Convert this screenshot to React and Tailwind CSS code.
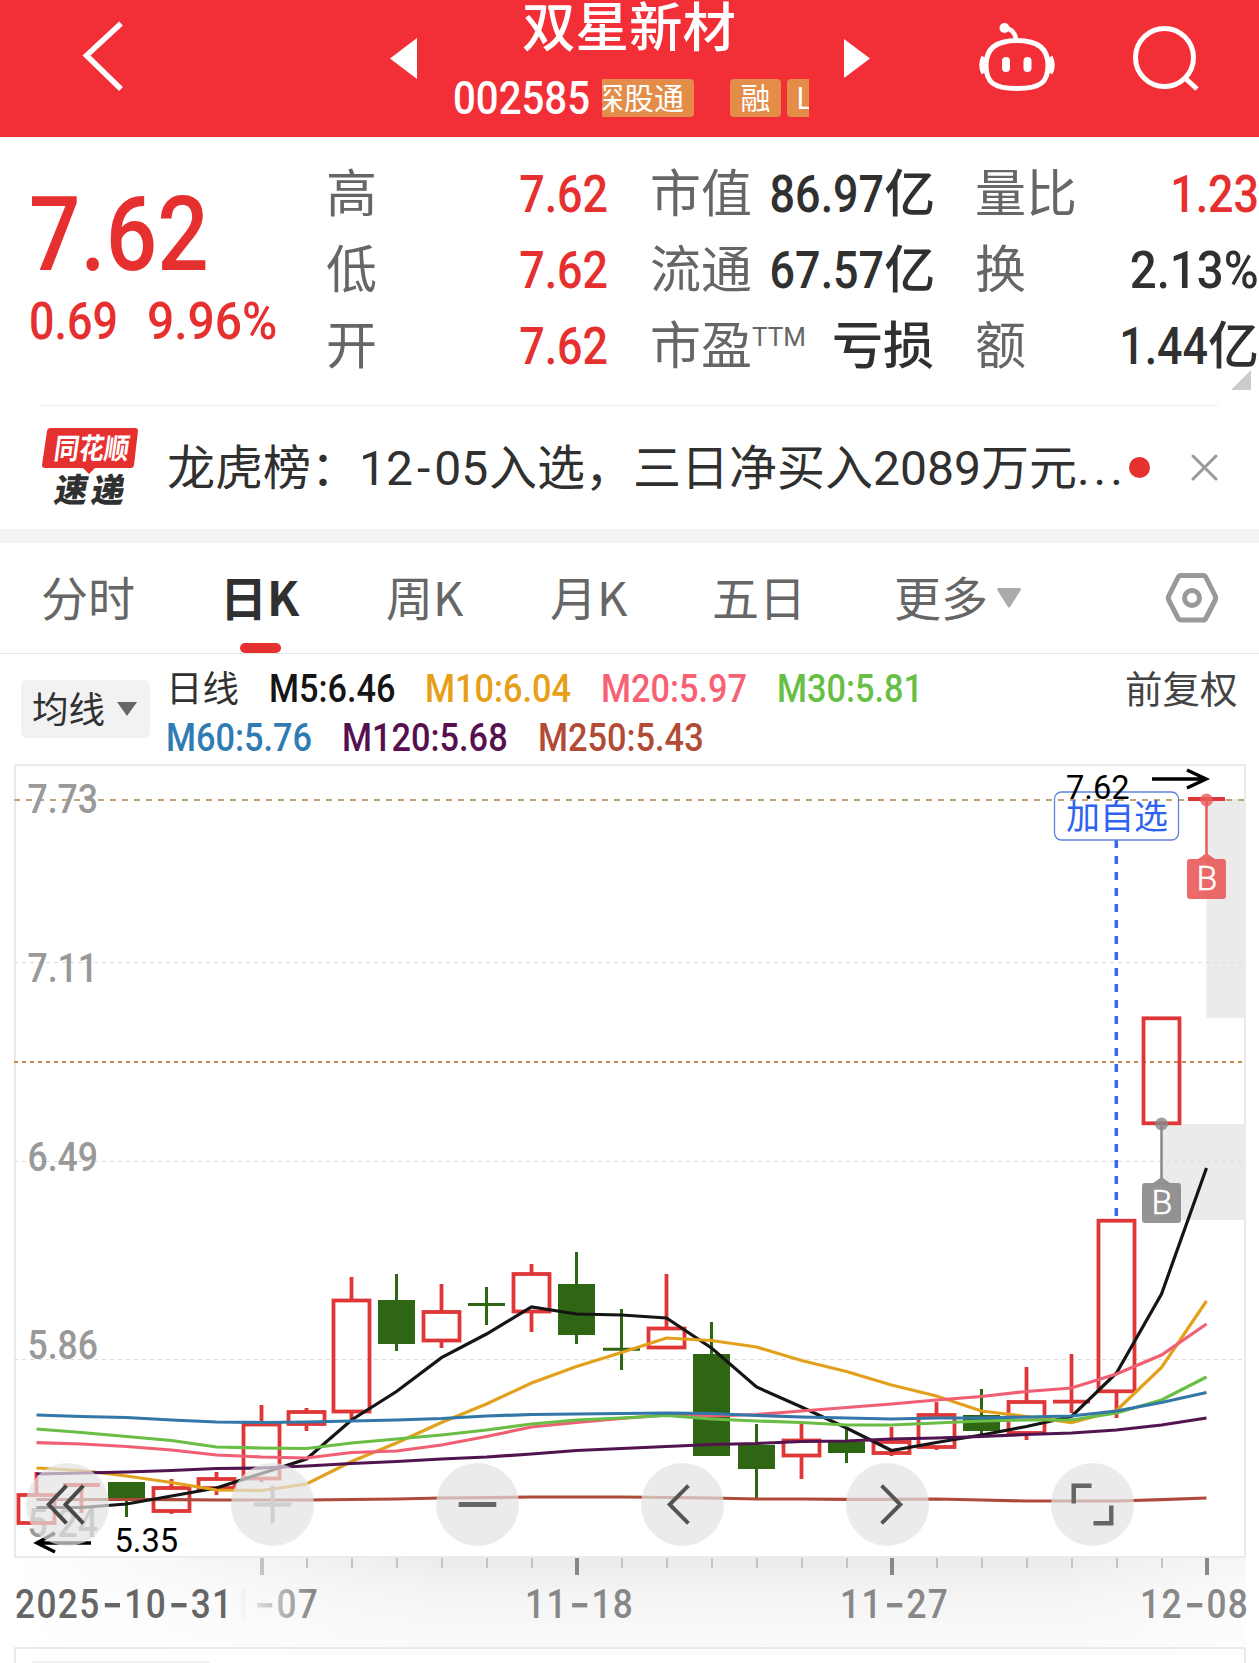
import clsx from 'clsx';

const MA_LEGEND = [
    [
        { label: 'M5:6.46', className: 'w-[156px] text-[#151515]' },
        { label: 'M10:6.04', className: 'w-[176px] text-[#e69f16]' },
        { label: 'M20:5.97', className: 'w-[176px] text-[#f66174]' },
        { label: 'M30:5.81', className: 'w-[176px] text-[#67bf45]' },
    ],
    [
        { label: 'M60:5.76', className: 'w-[176px] text-[#2f7cb4]' },
        { label: 'M120:5.68', className: 'w-[196px] text-[#57104f]' },
        { label: 'M250:5.43', className: 'w-[196px] text-[#b14b35]' },
    ],
];

// [high, body top, body bottom, low, up]
const CANDLES = [
    [1472, 1495, 1523, 1523, 1],
    [1485, 1485, 1485, 1513, 1],
    [1482, 1482, 1498, 1517, 0],
    [1479, 1488, 1511, 1514, 1],
    [1472, 1479, 1488, 1495, 1],
    [1405, 1424.5, 1478.5, 1482, 1],
    [1408, 1412, 1424, 1431, 1],
    [1277, 1300.5, 1411.5, 1419, 1],
    [1274, 1300, 1344, 1351, 0],
    [1284, 1312, 1340.5, 1348, 1],
    [1287, 1304.5, 1304.5, 1325, 0],
    [1264, 1274, 1311.5, 1332, 1],
    [1252, 1284, 1335, 1344, 0],
    [1309, 1349.3, 1349.3, 1370, 0],
    [1274, 1328.5, 1347.5, 1347.5, 1],
    [1322, 1354, 1456, 1456, 0],
    [1424, 1445, 1469, 1498, 0],
    [1424, 1440.5, 1455.5, 1479, 1],
    [1427, 1441.5, 1453, 1463, 0],
    [1427, 1442, 1453, 1456, 1],
    [1402, 1415, 1447, 1450, 1],
    [1389, 1415, 1431, 1434, 0],
    [1367, 1402, 1433, 1440, 1],
    [1354, 1401.7, 1401.7, 1413, 1],
    [1220.7, 1220.7, 1391.3, 1418, 1],
    [1018.3, 1018.3, 1123.3, 1123.3, 1],
    [799, 799, 799, 799, 1],
];

const MA_LINES = [
    { color: '#ae4a3a', ys: [1499.5, 1499.5, 1499.5, 1499.7, 1500, 1500, 1500, 1499.5, 1499, 1498, 1497.7, 1497, 1497, 1497, 1497.5, 1498, 1499, 1499, 1499.3, 1499.3, 1499, 1500, 1501, 1501, 1501, 1499.7, 1498] },
    { color: '#151515', ys: [1507.5, 1507.5, 1504, 1496, 1488, 1473.5, 1459, 1420, 1391.5, 1357.7, 1334, 1307, 1314, 1315, 1318, 1348, 1387, 1407, 1428, 1450.5, 1442.5, 1435, 1426.5, 1416.5, 1373, 1294, 1168] },
    { color: '#e3a01c', ys: [1468, 1470.5, 1476, 1482.5, 1490, 1490.5, 1484, 1461.5, 1443, 1422.5, 1404, 1383, 1366.5, 1352.5, 1338, 1340.5, 1347, 1360.5, 1371.5, 1385, 1396, 1411, 1416.5, 1422.5, 1410.5, 1367.5, 1301] },
    { color: '#f05f73', ys: [1442.7, 1444, 1446.5, 1450, 1455, 1457, 1458, 1452.5, 1451, 1445, 1436.5, 1427, 1422.5, 1418.5, 1415, 1416, 1414.5, 1411, 1407.5, 1404, 1400, 1396.5, 1391.5, 1388, 1374, 1355, 1324] },
    { color: '#6abd45', ys: [1429, 1432.5, 1436.5, 1440.5, 1447, 1448, 1448.5, 1443, 1439, 1435, 1430, 1424, 1420, 1418, 1415.5, 1419, 1421, 1422.5, 1425, 1425, 1423, 1421, 1420, 1420, 1413, 1400, 1377] },
    { color: '#3277a8', ys: [1415, 1416.5, 1417.5, 1420, 1422, 1422.5, 1422, 1421, 1420, 1418.5, 1416, 1414.5, 1414, 1413.5, 1413, 1413.5, 1415.5, 1417, 1418, 1419, 1418, 1418, 1417, 1416, 1411, 1402.5, 1392.5] },
    { color: '#521351', ys: [1474, 1473, 1472, 1470.5, 1468.5, 1468, 1466, 1463.5, 1461.5, 1459, 1457, 1454, 1450.5, 1448.5, 1446.5, 1444.5, 1443.5, 1441.5, 1441, 1439, 1438, 1436.5, 1434.5, 1433, 1430, 1425, 1418] },
];

const xAt = (i) => 36.5 + i * 45;

const Num = ({ children, className, scale = 'scale-x-[0.88]' }) => (
    <span className={clsx('inline-block whitespace-nowrap font-[Roboto] font-medium', scale, className)}>{children}</span>
);

const Header = () => (
    <header className="flex h-[137px] items-start bg-[#f22f37] text-white">
        <svg className="ml-[80px] mt-[18px] h-[76px] w-[46px]" viewBox="80 18 46 76" fill="none" stroke="white" strokeWidth="5.5">
            <path d="M121 23.500L86.500 55.500L121 89" />
        </svg>
        <svg className="ml-[264px] mt-[38px] h-[41px] w-[27px]" viewBox="0 0 27 41" fill="white"><path d="M27 0V41L0 20.500Z" /></svg>
        <div className="ml-[36px] w-[356px]">
            <h1 className="h-[79px] pr-[4px] text-center text-[53.500px] font-medium leading-[48px]">双星新材</h1>
            <div className="flex h-[38px] items-center">
                <div className="w-[149px] shrink-0"><Num scale="scale-x-[0.855]" className="origin-left translate-y-px text-[47px] leading-[38px]">002585</Num></div>
                <div className="flex w-[207px] overflow-hidden text-[30px] leading-[34px]">
                    <div className="flex h-[38px] w-[92px] shrink-0 justify-end overflow-hidden rounded-r bg-[#e38d49] pr-[10px]"><span className="whitespace-nowrap">深股通</span></div>
                    <div className="ml-[36px] h-[38px] w-[51px] shrink-0 rounded bg-[#e38d49] text-center">融</div>
                    <div className="ml-[6px] h-[38px] w-[51px] shrink-0 rounded bg-[#e38d49] pl-[9px]">L1</div>
                </div>
            </div>
        </div>
        <svg className="ml-[35px] mt-[39px] h-[39px] w-[26px]" viewBox="0 0 26 39" fill="white"><path d="M0 0V39L26 19.500Z" /></svg>
        <svg className="ml-[107px] mt-[20px] h-[76px] w-[80px]" viewBox="977 20 80 76" fill="none" stroke="white" strokeWidth="5">
            <path d="M1017 40.500C1037 40.500 1048 48 1048 65C1048 82 1041 88.500 1017 88.500C993 88.500 986 82 986 65C986 48 997 40.500 1017 40.500Z" />
            <path d="M984 57Q980 65 984 73M1050 57Q1054 65 1050 73" strokeWidth="5.500" />
            <path d="M1005 28Q1015 29 1016 40" strokeWidth="4.500" />
            <circle cx="1004.500" cy="28" r="5" fill="white" stroke="none" />
            <rect x="1002" y="57" width="8" height="15" rx="4" fill="white" stroke="none" />
            <rect x="1023.500" y="57" width="8" height="15" rx="4" fill="white" stroke="none" />
        </svg>
        <svg className="ml-[73px] mt-[22px] h-[72px] w-[70px]" viewBox="1130 22 70 72" fill="none" stroke="white" strokeWidth="5">
            <circle cx="1164.500" cy="57.500" r="29" />
            <path d="M1185 78L1197 89" />
        </svg>
    </header>
);

const Stat = ({ label, sup, value, unit, scale, red }) => (
    <div className="flex h-[76px] items-center justify-between whitespace-nowrap">
        <span className="flex -translate-x-[2px] -translate-y-[3px] text-[#666]">
            {label}
            {sup && <sup className="top-0 pt-[13px] font-[Roboto] text-[26px] leading-[40px]">{sup}</sup>}
        </span>
        <span className={clsx('flex items-center font-medium', red ? 'text-[#e63030]' : 'text-[#303030]')}>
            {value && <Num scale={scale} className="origin-right translate-y-[2px]">{value}</Num>}
            {unit && <span className="-translate-y-[3px]">{unit}</span>}
        </span>
    </div>
);

const Quote = () => (
    <section className="relative flex h-[268px] pt-[18px] text-[51px] leading-[76px]">
        <div className="w-[328px] pl-[29px] text-[#e63030]">
            <div className="mt-[28px] h-[104px] leading-[104px]"><Num className="origin-left text-[103px]">7.62</Num></div>
            <div className="flex h-[60px] leading-[60px]">
                <div className="w-[118px]"><Num className="origin-left">0.69</Num></div>
                <div><Num scale="scale-x-[0.94]" className="origin-left">9.96%</Num></div>
            </div>
        </div>
        <div className="w-[280px]">
            <Stat label="高" value="7.62" red />
            <Stat label="低" value="7.62" red />
            <Stat label="开" value="7.62" red />
        </div>
        <div className="ml-[44px] w-[282px]">
            <Stat label="市值" value="86.97" unit="亿" />
            <Stat label="流通" value="67.57" unit="亿" />
            <Stat label="市盈" sup="TTM" unit="亏损" />
        </div>
        <div className="ml-[43px] w-[282px]">
            <Stat label="量比" value="1.23" red />
            <Stat label="换" value="2.13%" scale="scale-x-[0.93]" />
            <Stat label="额" value="1.44" unit="亿" />
        </div>
        <svg className="absolute bottom-[15px] right-[8px] h-[20px] w-[20px]" viewBox="0 0 20 20" fill="#ccc"><path d="M20 0V20H0Z" /></svg>
    </section>
);

const News = () => (
    <section className="mx-[41px] flex h-[124px] items-center border-t border-[#ececec] text-[48px] text-[#303030]">
        <svg className="h-[84px] w-[98px] shrink-0" viewBox="41 426 98 84">
            <path d="M51 428H135Q138 428 138 431L134 465Q133.500 468 131 468H95L89 474L83 468H45Q42 468 42 465L47 431Q47.500 428 51 428Z" fill="#e63030" />
            <text transform="translate(53 459) skewX(-8)" textLength="75" lengthAdjust="spacingAndGlyphs" fontSize="29" fontWeight="700" fill="white">同花顺</text>
            <text transform="translate(53 502) skewX(-10)" textLength="70" fontSize="33" fontWeight="900" fill="#303030">速递</text>
        </svg>
        <p className="ml-[28px] flex w-[962px] shrink-0 translate-y-px whitespace-nowrap font-[Roboto,'Noto_Sans_CJK_SC',sans-serif]">
            <span>龙虎榜：</span>
            <span className="w-[130px]">12<span className="mx-[4px]">-</span>05</span>
            <span>入选，三日净买入</span>
            <span>2089</span>
            <span>万元</span>
            <span className="tracking-[4px]">...</span>
        </p>
        <span className="h-[21px] w-[21px] shrink-0 rounded-full bg-[#e63030]" />
        <svg className="ml-[41px] h-[27px] w-[27px] shrink-0" viewBox="0 0 27 27" stroke="#999" strokeWidth="3" strokeLinecap="round"><path d="M2 2L25 25M25 2L2 25" /></svg>
    </section>
);

const Tabs = () => (
    <nav className="flex h-[111px] items-center border-b border-[#e6e6e6] text-[47px] leading-[104px] text-[#666]">
        <span className="ml-[41px] w-[179px] -translate-y-[2px]">分时</span>
        <span className="relative w-[166px] font-bold text-[#303030]">
            <span className="block -translate-y-[2px]">日K</span>
            <i className="absolute bottom-[-3px] left-[20px] h-[10px] w-[41px] rounded-full bg-[#e63030]" />
        </span>
        <span className="w-[164px] -translate-y-[2px]">周K</span>
        <span className="w-[162px] -translate-y-[2px]">月K</span>
        <span className="w-[182px] -translate-y-[2px]">五日</span>
        <span className="w-[103px] -translate-y-[2px]">更多</span>
        <svg className="h-[20px] w-[24px]" viewBox="0 0 24 20" fill="#aaa"><path d="M1 0H23Q24.500 1 23.500 2.500L13 19Q12 20.500 11 19L0.500 2.500Q-0.500 1 1 0Z" /></svg>
        <svg className="ml-[143px] h-[52px] w-[56px]" viewBox="1164 572 56 52" fill="none" stroke="#999" strokeWidth="5" strokeLinejoin="round">
            <path d="M1181 575.500H1203Q1205 575.500 1206 577.500L1215 595.500Q1216.500 598 1215 600.500L1206 618Q1205 620 1203 620H1181Q1179 620 1178 618L1169 600.500Q1167.500 598 1169 595.500L1178 577.500Q1179 575.500 1181 575.500Z" />
            <circle cx="1192" cy="598" r="7.500" />
        </svg>
    </nav>
);

const Legend = () => (
    <section className="flex h-[106px] text-[36.500px] text-[#303030]">
        <button className="ml-[21px] mt-[26px] flex h-[58px] w-[129px] items-center rounded-[6px] bg-[#f2f2f2] pl-[11px] leading-[50px]">
            <span className="w-[85px] -translate-y-px text-left">均线</span>
            <svg className="h-[14px] w-[20px]" viewBox="0 0 20 14" fill="#666"><path d="M0 0H20L10 14Z" /></svg>
        </button>
        <div className="ml-[16px] mt-[7px] w-[959px] text-[39px] leading-[48px]">
            <div className="flex h-[49px]">
                <span className="w-[103px] translate-y-[2px] text-[36.500px]">日线</span>
                {MA_LEGEND[0].map((m) => <div key={m.label} className={m.className}><Num className="origin-left">{m.label}</Num></div>)}
            </div>
            <div className="flex h-[49px]">
                {MA_LEGEND[1].map((m) => <div key={m.label} className={m.className}><Num className="origin-left">{m.label}</Num></div>)}
            </div>
        </div>
        <span className="mt-[9px] whitespace-nowrap text-[37.500px] leading-[48px] text-[#444]">前复权</span>
    </section>
);

const Candle = ({ x, data }) => {
    const [high, top, bottom, low, up] = data;
    const color = up ? '#df3737' : '#2f6614';
    return (
        <g stroke={color} strokeWidth={up ? 3.8 : 3}>
            {high < top && <path d={`M${x} ${high}V${top}`} />}
            {low > bottom && <path d={`M${x} ${bottom}V${low}`} />}
            {top === bottom && <path d={`M${x - 18.5} ${top}H${x + 18.5}`} />}
            {top !== bottom && up === 1 && <rect x={x - 18} y={top} width="36" height={bottom - top} fill="none" />}
            {top !== bottom && up === 0 && <rect x={x - 18.5} y={top} width="37" height={bottom - top} fill={color} stroke="none" />}
        </g>
    );
};

const AxisText = ({ x, y, size = 40, sx = 0.89, weight = 500, fill = '#999', children }) => (
    <text transform={`translate(${x} ${y}) scale(${sx} 1)`} fontFamily="Roboto" fontSize={size} fontWeight={weight} fill={fill}>{children}</text>
);

const DateText = ({ x, fill = '#888', value }) => (
    <text transform={`translate(${x} 1617.700) scale(0.88 1)`} fontFamily="Roboto" fontSize="40" fontWeight="500" letterSpacing="1.600" fill={fill}>
        {value.split('-').map((part, i) => (
            <tspan key={i}>
                {i > 0 && <tspan fontFamily="Inter" fontSize="54" fontWeight="400" letterSpacing="0" dx="1" dy="4">-</tspan>}
                <tspan dx={i > 0 ? 1 : 0} dy={i > 0 ? -4 : 0}>{part}</tspan>
            </tspan>
        ))}
    </text>
);

const TradeMark = ({ x, y, color }) => (
    <g>
        <circle cx={x} cy={y} r="6.500" fill={color} fillOpacity="0.8" />
        <path d={`M${x} ${y}V${y + 54}`} stroke={color} strokeWidth="2.500" />
        <path d={`M${x - 9} ${y + 59.500}L${x} ${y + 53}L${x + 9} ${y + 59.500}Z`} fill={color} fillOpacity="0.9" />
        <rect x={x - 19.500} y={y + 59} width="39" height="40" rx="3" fill={color} fillOpacity="0.9" />
        <text x={x + 0.500} y={y + 90} fontFamily="Roboto" fontSize="34" fontWeight="300" textAnchor="middle" fill="white" stroke="white" strokeWidth="0.500">B</text>
    </g>
);

const Chart = () => (
    <svg className="block h-[904px] w-[1259px]" viewBox="0 759 1259 904" fill="none">
        <defs>
            <linearGradient id="axisShade" x1="0" y1="0" x2="0" y2="1">
                <stop offset="0" stopColor="#ebebeb" />
                <stop offset="0.400" stopColor="#f5f5f5" />
                <stop offset="1" stopColor="#fbfbfb" />
            </linearGradient>
            <linearGradient id="axisFade" x1="0" y1="0" x2="1" y2="0">
                <stop offset="0" stopColor="#fff" />
                <stop offset="0.350" stopColor="#fff" stopOpacity="0" />
                <stop offset="0.850" stopColor="#fff" stopOpacity="0" />
                <stop offset="1" stopColor="#fff" stopOpacity="0.600" />
            </linearGradient>
            <linearGradient id="dateFade" x1="32" y1="0" x2="115" y2="0" gradientUnits="userSpaceOnUse">
                <stop offset="0" stopColor="#888" stopOpacity="0" />
                <stop offset="1" stopColor="#888" />
            </linearGradient>
        </defs>

        <rect x="14" y="1557" width="1232" height="98" fill="url(#axisShade)" />
        <rect x="14" y="1557" width="1232" height="98" fill="url(#axisFade)" />
        <rect x="15" y="765" width="1230" height="792" stroke="#ebebeb" strokeWidth="2" />
        <path d="M15 1663V1648H1245V1663" stroke="#ebebeb" strokeWidth="2" />
        <rect x="29" y="1661" width="183" height="20" rx="6" fill="#f0f0f0" />

        <rect x="1206.500" y="799" width="39.500" height="219" fill="#ebebeb" />
        <rect x="1162" y="1124" width="84" height="96" fill="#ebebeb" />
        <path d="M14 962.500H1243M14 1161.500H1243M14 1359.500H1243" stroke="#dcdcdc" strokeDasharray="4 4" />
        <path d="M14 800H1244" stroke="#bfa47c" strokeWidth="2" strokeDasharray="6 6" />
        <path d="M14 1062H1243" stroke="#c98a4f" strokeWidth="2" strokeDasharray="4 4" />

        <AxisText x="27.500" y="813">7.73</AxisText>
        <AxisText x="27.500" y="981.700">7.11</AxisText>
        <AxisText x="27.500" y="1171">6.49</AxisText>
        <AxisText x="27.500" y="1359">5.86</AxisText>
        <AxisText x="27.500" y="1537">5.24</AxisText>

        {CANDLES.map((c, i) => <Candle key={i} x={xAt(i)} data={c} />)}
        {MA_LINES.map((line) => (
            <polyline key={line.color} points={line.ys.map((y, i) => `${xAt(i)},${y}`).join(' ')} stroke={line.color} strokeWidth="3.200" />
        ))}

        <path d="M91 1543H37M55 1533L37 1543L55 1552" stroke="black" strokeWidth="3.500" />
        <AxisText x="114.500" y="1551.700" size={34} sx={0.96} weight={400} fill="black">5.35</AxisText>

        <path d="M1116.300 840V1217" stroke="#3b68e8" strokeWidth="3.500" strokeDasharray="8 8" />
        <rect x="1054.500" y="792" width="124" height="48" rx="7" stroke="#5f82d8" strokeWidth="1.300" />
        <text x="1066" y="829" fontSize="34" fill="#2f62f0">加自选</text>
        <AxisText x="1066" y="799" size={34} sx={0.96} weight={400} fill="black">7.62</AxisText>
        <path d="M1152 779H1205M1187 770L1206 779L1187 788" stroke="black" strokeWidth="3.500" />

        <TradeMark x={1206.500} y={800} color="#eb5a5a" />
        <TradeMark x={1161.500} y={1124} color="#888888" />

        {CANDLES.map((c, i) => {
            if (i < 5) return null;
            const major = (i - 5) % 7 === 0;
            return <path key={i} d={`M${xAt(i) + 0.5} 1558V${major ? 1575 : 1568}`} stroke={major && i > 5 ? '#888' : '#c4c4c4'} strokeWidth={major ? 4 : 2} />;
        })}
        <DateText x={15} fill="#666" value="2025-10-31" />
        <DateText x={210} fill="url(#dateFade)" value="11-07" />
        <DateText x={525} value="11-18" />
        <DateText x={840} value="11-27" />
        <DateText x={1140} value="12-08" />
    </svg>
);

const TOOLS = [
    { name: 'oldest', d: 'M41 23L23 42L41 61M58 23L40 42L58 61', color: '#484848' },
    { name: 'zoom-in', d: 'M23 42H61M42 23V61', color: '#cfcfcf' },
    { name: 'zoom-out', d: 'M23 42H61', color: '#666', width: 5 },
    { name: 'prev', d: 'M48 23L29 42L48 61', color: '#555' },
    { name: 'next', d: 'M36 23L55 42L36 61', color: '#555' },
    { name: 'fullscreen', d: 'M23 41V23H41M61 43V61H43', color: '#666', width: 4.5 },
];

const Toolbar = () => (
    <div className="absolute left-[26px] top-[704px] flex gap-[122px]">
        {TOOLS.map((t) => (
            <button key={t.name} aria-label={t.name} className="h-[83px] w-[83px] rounded-full bg-[#e3e3e3]/70">
                <svg viewBox="0 0 84 84" fill="none" stroke={t.color} strokeWidth={t.width || 4}><path d={t.d} /></svg>
            </button>
        ))}
    </div>
);

export default function App() {
    return (
        <div className="h-[1663px] w-[1259px] overflow-hidden bg-white font-['Noto_Sans_CJK_SC',sans-serif]">
            <Header />
            <Quote />
            <News />
            <div className="h-[14px] bg-[#f4f4f4]" />
            <Tabs />
            <Legend />
            <div className="relative mt-[-1px]">
                <Chart />
                <Toolbar />
            </div>
        </div>
    );
}
